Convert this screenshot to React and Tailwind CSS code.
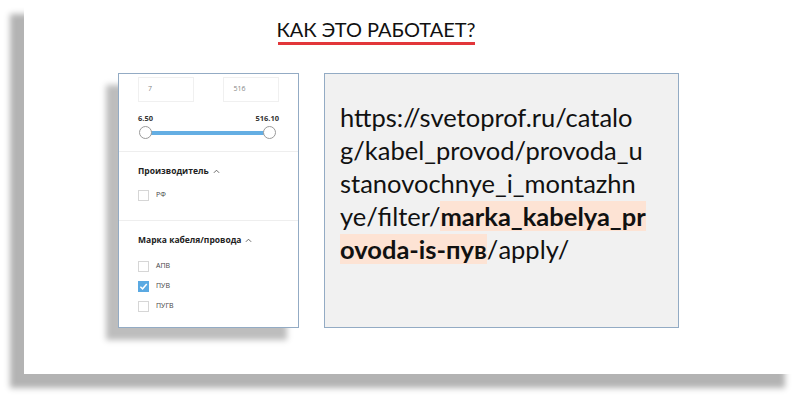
import React from "react";

const Check = ({ checked }) => (
  <span
    className={
      checked
        ? "flex h-[11px] w-[11px] items-center justify-center bg-[#5aa9e2]"
        : "h-[11px] w-[11px] border border-[#d6d6d6] bg-white"
    }
  >
    {checked && (
      <svg width="9" height="9" viewBox="0 0 10 10">
        <path d="M1.5 5.2 L4 7.6 L8.6 2.2" fill="none" stroke="#fff" strokeWidth="1.6" />
      </svg>
    )}
  </span>
);

const Chevron = () => (
  <svg width="7" height="5" viewBox="0 0 8 5" className="ml-[4px]">
    <path d="M1 4 L4 1 L7 4" fill="none" stroke="#555" strokeWidth="1" />
  </svg>
);

const Option = ({ label, checked }) => (
  <div className="flex h-[20px] items-center gap-[7px]">
    <Check checked={checked} />
    <span className="text-[7px] text-[#444]">{label}</span>
  </div>
);

const App = () => {
  return (
    <div className="relative h-[397px] w-[799px] overflow-hidden bg-white">
      <div className="ml-[24px] flex h-[374px] w-[775px] flex-col bg-white shadow-[-14px_14px_6px_#b3b3b3]">
        {/* title */}
        <div className="ml-[253px] mt-[17px] flex w-[198px] flex-col items-center">
          <div className="whitespace-nowrap font-['Lato','Open_Sans',sans-serif] text-[20px] leading-[24px] text-[#111]">
            КАК ЭТО РАБОТАЕТ?
          </div>
          <div className="mt-[1px] h-[3px] w-[197px] bg-[#e2363a]" />
        </div>

        <div className="ml-[94px] mt-[28px] flex gap-[25px]">
          {/* filter panel */}
          <div className="flex h-[255px] w-[181px] flex-col border border-[#93abc4] bg-white font-['Open_Sans',sans-serif] shadow-[-12px_12px_6px_#bdbdbd]">
            <div className="flex gap-[29px] px-[19px] pt-[3px]">
              <div className="flex h-[25px] w-[56px] items-center border border-[#f0f0f0] pl-[9px] text-[7px] text-[#888]">
                7
              </div>
              <div className="flex h-[25px] w-[57px] items-center border border-[#f0f0f0] pl-[10px] text-[7px] text-[#888]">
                516
              </div>
            </div>
            <div className="px-[19px] pt-[12px]">
              <div className="flex justify-between text-[7.5px] font-bold leading-[9px] text-[#333]">
                <span>6.50</span>
                <span>516.10</span>
              </div>
              <div className="relative mt-[3px] h-[14px]">
                <div className="absolute left-[7px] right-[9px] top-[5px] h-[4px] bg-[#64aee3]" />
                <div className="absolute left-[1px] top-0 h-[13px] w-[13px] rounded-full border border-[#9a9a9a] bg-white" />
                <div className="absolute right-[3px] top-0 h-[13px] w-[13px] rounded-full border border-[#9a9a9a] bg-white" />
              </div>
            </div>
            <div className="mt-[11px] border-t border-[#eeeeee]" />
            <div className="px-[19px] pt-[12px]">
              <div className="flex h-[14px] items-center text-[8.5px] font-bold text-[#222]">
                Производитель
                <Chevron />
              </div>
              <div className="mt-[7px]">
                <Option label="РФ" />
              </div>
            </div>
            <div className="mt-[15px] border-t border-[#eeeeee]" />
            <div className="px-[19px] pt-[12px]">
              <div className="flex h-[14px] items-center text-[8.5px] font-bold text-[#222]">
                Марка кабеля/провода
                <Chevron />
              </div>
              <div className="mt-[9px]">
                <Option label="АПВ" />
                <Option label="ПУВ" checked />
                <Option label="ПУГВ" />
              </div>
            </div>
          </div>

          {/* url panel */}
          <div className="h-[255px] w-[355px] border border-[#93abc4] bg-[#f1f1f1] pl-[15px] pt-[27px] font-['Lato','Open_Sans',sans-serif] text-[25.5px] leading-[33px] text-[#111]">
            <div>https://svetoprof.ru/catalo</div>
            <div>g/kabel_provod/provoda_u</div>
            <div>stanovochnye_i_montazhn</div>
            <div>
              ye/filter/
              <span className="bg-[#fde3d4] font-bold">marka_kabelya_pr</span>
            </div>
            <div>
              <span className="bg-[#fde3d4] font-bold">ovoda-is-пув</span>/apply/
            </div>
          </div>
        </div>
      </div>
    </div>
  );
};

export default App;
